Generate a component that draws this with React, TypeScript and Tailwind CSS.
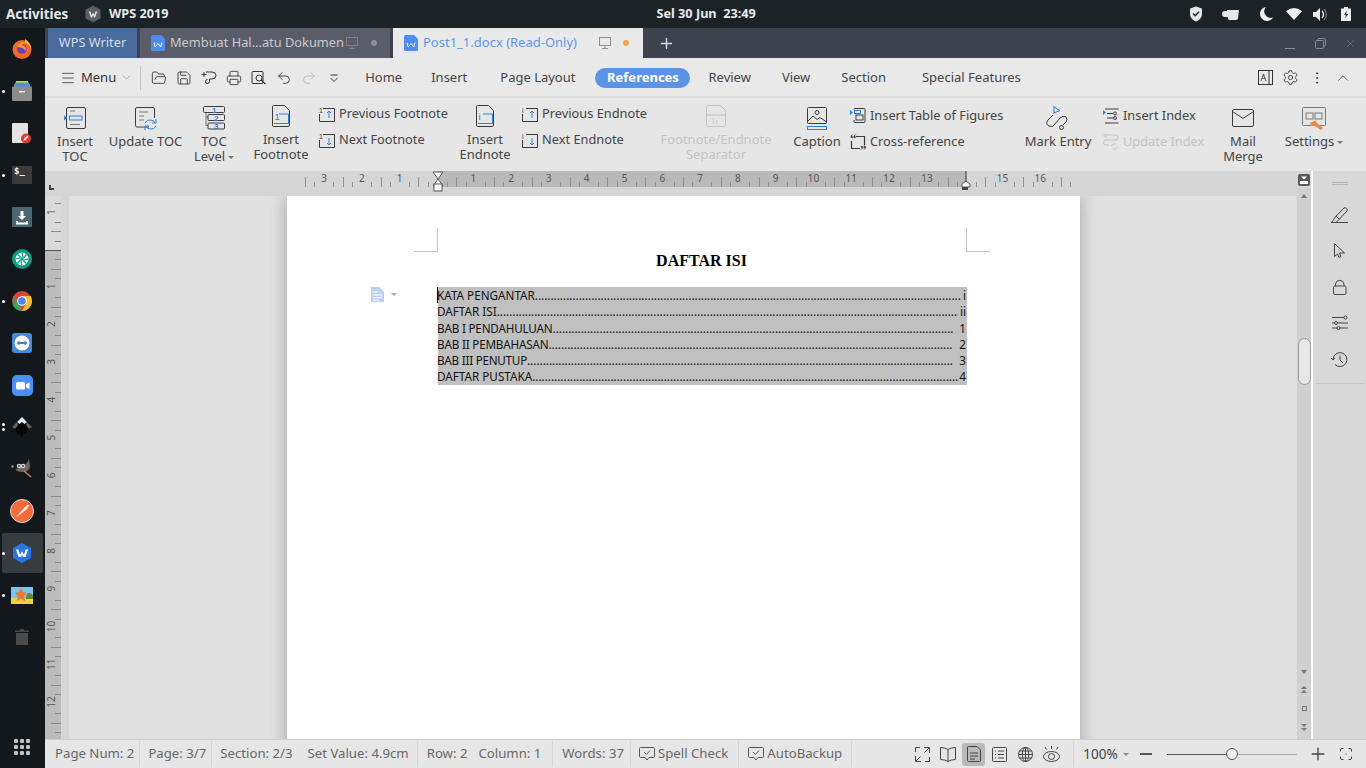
import { ReactNode } from "react";
import { ChevronDown, ChevronUp, FolderOpen, Menu, MoreVertical, Plus, Printer, Redo2, Save, Settings, Undo2, X } from "lucide-react";

const UI = "font-['Noto_Sans',sans-serif]";
const BLUE = "#2f7fe0";
const INK = "#3a3a3a";

function Ico({ s = 24, w, h, vb, children, className }: { s?: number; w?: number; h?: number; vb?: string; children: ReactNode; className?: string }) {
  const width = w ?? s;
  const height = h ?? s;
  return (
    <svg width={width} height={height} viewBox={vb ?? `0 0 ${width} ${height}`} fill="none" stroke={INK} strokeWidth="1" className={`shrink-0 ${className ?? ""}`}>
      {children}
    </svg>
  );
}

/* ---------- top bar ---------- */
function TopBar() {
  return (
    <div className="flex h-[28px] items-center bg-[#1b2327] text-[12.700px] font-bold text-[#e8eaeb]">
      <span className="ml-[6px] w-[79px] text-[13.400px]">Activities</span>
      <svg width="16" height="18" viewBox="0 0 16 18">
        <path d="M8 .5 15.500 4.700v8.600L8 17.500.5 13.300V4.700z" fill="#5c6064" />
        <path d="M3.800 6.500h1.600l1.200 4 1.400-3 1.400 3 1.200-4h1.600l-2.200 6H9L8 10l-1 2.500H6z" fill="#f0f0f0" />
      </svg>
      <span className="ml-[8px]">WPS 2019</span>
      <span className="ml-[488px] whitespace-pre">Sel 30 Jun  23:49</span>
      <div className="ml-auto flex items-center">
        <svg width="14" height="16" viewBox="0 0 14 16" className="mr-[19px]">
          <path d="M7 .5 13 2.500V8c0 3.500-2.500 6-6 7.500C3.500 14 1 11.500 1 8V2.500z" fill="#e6e6e6" />
          <path d="m4 7.500 2.200 2.300L10 5.800" stroke="#1b2327" strokeWidth="1.400" fill="none" />
        </svg>
        <svg width="17" height="11" viewBox="0 0 17 11" className="mr-[21px]">
          <path d="M5 1h12l-1 8.500q-.2 1.500-2 1.500H8q-1.800 0-2-1.500L5.800 8H3Q0 8 0 5t3-3h2z" fill="#e6e6e6" />
        </svg>
        <svg width="13" height="14" viewBox="0 0 13 14" className="mr-[13px]">
          <path d="M6 0a7 7 0 1 0 7 10.500A6.500 6.500 0 0 1 6 0z" fill="#eeeeee" />
        </svg>
        <svg width="16" height="12" viewBox="0 0 16 12" className="mr-[11px]">
          <path d="M0 3.200Q8-3.200 16 3.200L8 12z" fill="#eeeeee" />
        </svg>
        <svg width="15" height="13" viewBox="0 0 15 13" className="mr-[13px]">
          <path d="M0 4h3l4-4v13L3 9H0z" fill="#eeeeee" />
          <path d="M9 3q3 3.500 0 7" stroke="#eeeeee" strokeWidth="1.300" fill="none" />
          <path d="M11 1q5 5.500 0 11" stroke="#777" strokeWidth="1.200" fill="none" />
        </svg>
        <svg width="10" height="14" viewBox="0 0 10 14" className="mr-[15px]">
          <path d="M3 0h4v1.500h3V14H0V1.500h3z" fill="#eeeeee" />
          <path d="M6 3.500 3 8h2l-1 3.500L7.200 7H5.200z" fill="#1b2327" />
        </svg>
      </div>
    </div>
  );
}

/* ---------- dock ---------- */
function DockItem({ dots = 0, active, children }: { dots?: number; active?: boolean; children: ReactNode }) {
  return (
    <div className="relative flex h-[42px] w-full shrink-0 items-center justify-center pr-px">
      {active && <div className="absolute inset-x-[2px] inset-y-px rounded-[2px] bg-[#373c41]" />}
      {dots > 0 && (
        <div className="absolute left-[2px] flex flex-col gap-[2px]">
          {Array.from({ length: dots }).map((_, i) => (
            <div key={i} className="h-[3px] w-[3px] rounded-full bg-white" />
          ))}
        </div>
      )}
      <div className="relative flex">{children}</div>
    </div>
  );
}

function Dock() {
  return (
    <div className="flex w-[45px] shrink-0 flex-col bg-[#13181c]">
      <DockItem>
        <svg width="20" height="21" viewBox="0 0 20 21" className="-translate-y-px">
          <circle cx="10" cy="11.500" r="9.500" fill="#f2682a" />
          <path d="M13 1q6 4 6 10-3-7-6-6z" fill="#ffbd2e" />
          <circle cx="10" cy="11" r="4.800" fill="#6a3fb5" />
          <path d="M5 9q2-5 8-5-3 2-3 3 5 1 4 6-3-4-9-4z" fill="#ff9a2e" />
        </svg>
      </DockItem>
      <DockItem dots={1}>
        <svg width="20" height="20" viewBox="0 0 20 20">
          <rect x="4" y="0" width="12" height="3" fill="#f2c53d" />
          <rect x="3" y="1.500" width="14" height="3" fill="#4caf7a" />
          <rect x="2" y="3" width="16" height="3" fill="#4a8fe0" />
          <rect x="0" y="5.500" width="20" height="14.500" rx="1" fill="#8c8c8c" />
          <rect x="7" y="10" width="6" height="1.500" fill="#eeeeee" />
        </svg>
      </DockItem>
      <DockItem>
        <svg width="21" height="21" viewBox="0 0 21 21">
          <rect x="0" y="0" width="16" height="20" rx="1" fill="#e4e4e4" />
          <circle cx="14" cy="15.500" r="5" fill="#e23a2e" />
          <path d="m11.500 18 1-3 3-2.500 1 1-2.500 3z" fill="#fff" />
        </svg>
      </DockItem>
      <DockItem dots={1}>
        <div className="flex h-[18px] w-[20px] items-start justify-start rounded-[1px] bg-[#3a3a3a] pl-[2px] font-['DejaVu_Sans_Mono',monospace] text-[9px] font-bold leading-[11px] text-white">$_</div>
      </DockItem>
      <DockItem>
        <svg width="20" height="20" viewBox="0 0 20 20">
          <rect width="20" height="20" fill="#4d6772" />
          <path d="M8.500 4h3v5H14l-4 4-4-4h2.500zM4 14h2v1.500h8V14h2v3.500H4z" fill="#fff" />
        </svg>
      </DockItem>
      <DockItem>
        <svg width="20" height="20" viewBox="0 0 20 20">
          <circle cx="10" cy="10" r="10" fill="#0e9a83" />
          <circle cx="10" cy="10" r="6.500" fill="#fff" />
          <path d="M10 3.500 11 8M16.500 10 12 11M10 16.500 9 12M3.500 10 8 9M5.500 5.500l3.500 3M14.500 5.500 11.500 9M14.500 14.500 11 11.500M5.500 14.500 8.500 11" stroke="#0e9a83" strokeWidth="1.200" />
          <circle cx="10" cy="10" r="1.800" fill="#0e9a83" />
        </svg>
      </DockItem>
      <DockItem dots={1}>
        <svg width="20" height="20" viewBox="0 0 20 20">
          <circle cx="10" cy="10" r="10" fill="#d9463d" />
          <path d="M1.340 15 1.340 5 6 12l4 8a10 10 0 0 1-8.660-5z" fill="#3ba55b" />
          <path d="M10 5h8.660A10 10 0 0 1 10 20l4.500-8z" fill="#f5c02e" />
          <circle cx="10" cy="10" r="4.800" fill="#fff" />
          <circle cx="10" cy="10" r="3.800" fill="#4a86e8" />
        </svg>
      </DockItem>
      <DockItem>
        <svg width="20" height="20" viewBox="0 0 20 20">
          <rect width="20" height="20" rx="3" fill="#4a88d8" />
          <circle cx="10" cy="10" r="7.500" fill="#fff" />
          <path d="M4.500 10 7.500 7.500V9h5V7.500l3 2.500-3 2.500V11h-5v1.500z" fill="#3f7fd0" />
        </svg>
      </DockItem>
      <DockItem>
        <svg width="21" height="21" viewBox="0 0 21 21">
          <rect width="21" height="21" rx="5" fill="#4a90f7" />
          <rect x="4" y="7" width="9" height="7.500" rx="1.500" fill="#fff" />
          <path d="m14 9.500 3.500-2.300v7l-3.500-2.300z" fill="#fff" />
        </svg>
      </DockItem>
      <DockItem dots={2}>
        <svg width="20" height="20" viewBox="0 0 20 20">
          <path d="M10 0 20 10l-5 3-1 4-2-1-2 4-2-3-3 1-1-4-4-4z" fill="#050607" />
          <path d="M10 0 15 5 12.500 7l-2.500-2-2.500 2L5 5z" fill="#e8e8e8" />
          <path d="M0 10 5 5l1 3-3 4zM20 10l-5-5-1 3 3 4z" fill="#5f6368" />
        </svg>
      </DockItem>
      <DockItem>
        <svg width="22" height="20" viewBox="0 0 22 20">
          <path d="M18 0 19 8q-1 5-8 5-5 0-7-3 4 0 8-3 4-2 6-7z" fill="#6e6658" />
          <circle cx="8" cy="7" r="2.200" fill="#ddd" />
          <circle cx="12" cy="7" r="2.200" fill="#ddd" />
          <circle cx="8" cy="7" r=".9" fill="#222" />
          <circle cx="12" cy="7" r=".9" fill="#222" />
          <circle cx="1.500" cy="7.500" r="1.200" fill="#999" />
          <path d="m13 12 7 6" stroke="#c98a3a" strokeWidth="1.500" />
        </svg>
      </DockItem>
      <DockItem>
        <svg width="24" height="24" viewBox="0 0 24 24">
          <circle cx="12" cy="12" r="11.500" fill="#f26b3a" stroke="#e9dcd4" />
          <path d="M6 18 14 9l3-3q2-1 2 1l-3 4-8 6z" fill="#fbe6da" />
        </svg>
      </DockItem>
      <DockItem dots={1} active>
        <svg width="18" height="20" viewBox="0 0 18 20">
          <path d="M9 0 18 5v10l-9 5-9-5V5z" fill="#2b74e2" />
          <path d="M3 6.500h2.500L7 12l2-4 2 4 1.500-5.500H15L12.500 14H10L9 11.500 8 14H5.500z" fill="#fff" />
        </svg>
      </DockItem>
      <DockItem dots={1}>
        <svg width="22" height="17" viewBox="0 0 22 17">
          <rect width="22" height="17" fill="#7ec4ea" />
          <rect y="11" width="22" height="6" fill="#f2d13e" />
          <path d="M15 12q0-6 3-6t4 3v3z" fill="#5c8a3a" />
          <path d="M10 1l2 4 4 1-3 3 1 5-4-2-4 2 1-5-3-3 4-1z" fill="#ea7a3a" />
        </svg>
      </DockItem>
      <DockItem>
        <svg width="14" height="16" viewBox="0 0 14 16">
          <path d="M0 1.500h5V0h4v1.500h5V3H0zM1 4h12v12H1z" fill="#4a4a4a" />
        </svg>
      </DockItem>
      <div className="mb-[13px] mr-px mt-auto grid w-[16px] grid-cols-3 gap-[2px] self-center">
        {Array.from({ length: 9 }).map((_, i) => (
          <div key={i} className="h-[4px] w-[4px] rounded-[1px] bg-[#bfc2c4]" />
        ))}
      </div>
    </div>
  );
}

/* ---------- tabs ---------- */
function DocBadge() {
  return (
    <svg width="14" height="16" viewBox="0 0 14 16" className="shrink-0">
      <path d="M1.500 0H10l4 4v10.500q0 1.500-1.500 1.500h-11Q0 16 0 14.500v-13Q0 0 1.500 0z" fill="#4f8cf0" />
      <path d="M3 7.500l1.300 4.500L7 8.500l2.700 3.500L11 7.500" stroke="#fff" fill="none" />
    </svg>
  );
}

function Monitor() {
  return (
    <svg width="12" height="12" viewBox="0 0 12 12" fill="none" stroke="#8d9099" className="shrink-0">
      <rect x=".5" y=".5" width="11" height="8" />
      <path d="M6 8.500v3M3 11.500h6" />
    </svg>
  );
}

function TabBar() {
  return (
    <div className="flex h-[30px] shrink-0 items-stretch bg-[#3e424f] pl-[3px] text-[12.800px]">
      <div className="flex w-[89px] items-center justify-center bg-[#486a9c] text-[#d5dce8]">WPS Writer</div>
      <div className="ml-[3px] flex w-[250px] items-center bg-[#5b5c69] pl-[11px] text-[#c9cad0]">
        <DocBadge />
        <span className="ml-[5px] whitespace-nowrap">Membuat Hal...atu Dokumen</span>
        <div className="ml-[2px] opacity-70"><Monitor /></div>
        <div className="ml-[13px] h-[6px] w-[6px] rounded-full bg-[#8d8f98]" />
      </div>
      <div className="ml-[3px] flex w-[250px] items-center bg-[#e9e9e9] pl-[11px] text-[#5d97ea]">
        <DocBadge />
        <span className="ml-[5px] whitespace-nowrap text-[13px]">Post1_1.docx (Read-Only)</span>
        <div className="ml-[22px]"><Monitor /></div>
        <div className="ml-[12px] h-[6px] w-[6px] rounded-full bg-[#f0a35a]" />
      </div>
      <div className="ml-[15px] flex items-center text-[#d8dadf]">
        <Plus size={17} strokeWidth={2} />
      </div>
      <div className="ml-auto flex items-center pr-[9px] text-[#8a8d97]">
        <div className="mt-[11px] h-px w-[10px] bg-[#8a8d97]" />
        <svg width="11" height="11" viewBox="0 0 11 11" fill="none" stroke="#8a8d97" className="ml-[20px]">
          <rect x=".5" y="2.500" width="8" height="8" rx="1" />
          <path d="M3 2.500V1.500q0-1 1-1h5.500q1 0 1 1V7q0 1-1 1h-1" />
        </svg>
        <X size={13} strokeWidth={1} className="ml-[18px]" />
      </div>
    </div>
  );
}

/* ---------- menu row ---------- */
const menuTabs = [
  { label: "Home", cls: "ml-[23px]" },
  { label: "Insert", cls: "ml-[29px]" },
  { label: "Page Layout", cls: "ml-[33px]" },
];
const menuTabs2 = [
  { label: "Review", cls: "ml-[18px]" },
  { label: "View", cls: "ml-[31px]" },
  { label: "Section", cls: "ml-[31px]" },
  { label: "Special Features", cls: "ml-[36px]" },
];

function MenuRow() {
  return (
    <div className="flex h-[38px] shrink-0 items-center bg-[#e9e9e9] pt-[1px] text-[13px] text-[#444]">
      <Menu size={16} strokeWidth={1.200} className="ml-[15px] text-[#333]" />
      <span className="ml-[5px] text-[#333]">Menu</span>
      <ChevronDown size={13} strokeWidth={1} className="ml-[4px] text-[#777]" />
      <div className="ml-[7px] h-[24px] w-px bg-[#c4c4c4]" />
      <div className="ml-[10px] flex items-center gap-[9px] text-[#333]">
        <FolderOpen size={16} strokeWidth={1.300} />
        <Save size={16} strokeWidth={1.300} />
        <svg width="16" height="16" viewBox="0 0 16 16" fill="none" stroke="currentColor">
          <path d="M5 2h6q4 0 4 3.500T11 9H8.500v2.500a2 2 0 1 1-2-2M.5 4.500h5M3 2v5" />
        </svg>
        <Printer size={16} strokeWidth={1.300} />
        <svg width="16" height="16" viewBox="0 0 16 16" fill="none" stroke="currentColor">
          <rect x="1" y="1.500" width="11" height="12" rx="1" />
          <circle cx="8" cy="8" r="3" />
          <path d="m10 10 4.500 4" strokeWidth="1.400" />
        </svg>
        <Undo2 size={16} strokeWidth={1.300} />
        <Redo2 size={16} strokeWidth={1.300} className="text-[#b5b5b5]" />
        <svg width="16" height="16" viewBox="0 0 16 16" fill="none" stroke="currentColor">
          <path d="M4.500 5h7M4.500 8l3.500 3.500L11.500 8" />
        </svg>
      </div>
      <div className="flex items-center">
        {menuTabs.map((t) => (
          <span key={t.label} className={t.cls}>{t.label}</span>
        ))}
        <span className="ml-[20px] flex h-[20px] w-[95px] items-center justify-center rounded-full bg-[#5b93e6] font-bold text-white">References</span>
        {menuTabs2.map((t) => (
          <span key={t.label} className={t.cls}>{t.label}</span>
        ))}
      </div>
      <div className="ml-auto flex items-center pr-[14px] text-[#333]">
        <svg width="15" height="15" viewBox="0 0 15 15" fill="none" stroke="currentColor">
          <rect x=".5" y=".5" width="14" height="14" />
          <path d="M11 .5v14" />
          <text x="2.500" y="10.500" fontSize="9" fill="currentColor" stroke="none">A</text>
        </svg>
        <Settings size={17} strokeWidth={1.200} className="ml-[9px]" />
        <MoreVertical size={16} strokeWidth={1.300} className="ml-[10px]" />
        <ChevronUp size={18} strokeWidth={1} className="ml-[9px]" />
      </div>
    </div>
  );
}

/* ---------- ribbon ---------- */
function Big({ icon, lines, w, ml, dim, caret, top = "pt-[8px]" }: { icon: ReactNode; lines: string[]; w: string; ml: string; dim?: boolean; caret?: boolean; top?: string }) {
  return (
    <div className={`flex shrink-0 flex-col items-center ${w} ${ml} ${top}`}>
      <div className="flex h-[24px] items-center">{icon}</div>
      <div className={`mt-[3.500px] flex flex-col items-center whitespace-nowrap text-center text-[13px] leading-[15px] ${dim ? "text-[#c4c4c4]" : "text-[#444]"}`}>
        {lines.map((l, i) => (
          <span key={l} className="flex items-center">
            {l}
            {caret && i === lines.length - 1 && <span className="ml-[3px] mt-[2px] h-0 w-0 border-x-[3px] border-t-[3px] border-x-transparent border-t-[#777]" />}
          </span>
        ))}
      </div>
    </div>
  );
}

function Small({ icon, label, dim }: { icon: ReactNode; label: string; dim?: boolean }) {
  return (
    <div className={`flex h-[26px] items-center whitespace-nowrap text-[12.800px] ${dim ? "text-[#c4c4c4]" : "text-[#444]"}`}>
      <span className="flex w-[20px] shrink-0">{icon}</span>
      {label}
    </div>
  );
}

function FootIcon({ up, mark }: { up: boolean; mark: string }) {
  return (
    <Ico w={16} h={16}>
      <path d="M4 2.500h11.500v13H.5V8" />
      <text x="0" y="6.500" fontSize="7" fill={INK} stroke="none" fontFamily="Liberation Sans">{mark}</text>
      {up ? <path d="M10 12V5M8 7l2-2 2 2" stroke={BLUE} /> : <path d="M10 6v7M8 11l2 2 2-2" stroke={BLUE} />}
    </Ico>
  );
}

function NoteIcon({ mark, dim }: { mark: string; dim?: boolean }) {
  const c = dim ? "#c2c2c2" : INK;
  const b = dim ? "#c2c2c2" : BLUE;
  return (
    <Ico w={18} h={22}>
      <path d="M1.500.5h11l5 5v14.500q0 1.500-1.500 1.500H1.500Q.5 21.500.5 20V1.500q0-1 1-1z" stroke={c} />
      <text x="2.500" y="15" fontSize="9.500" fill={b} stroke="none" fontFamily="Liberation Sans">{mark}</text>
      <path d="M7 9h9.500v9.500H2" stroke={b} />
    </Ico>
  );
}

function Ribbon() {
  return (
    <div className="flex h-[75px] shrink-0 items-start border-t-2 border-[#dcdcdc] bg-[#e6e6e6] pl-[7px]">
      <Big
        w="w-[46px]"
        ml=""
        lines={["Insert", "TOC"]}
        icon={
          <Ico w={22} h={22}>
            <rect x="2.500" y=".5" width="19" height="21" rx="1.500" />
            <path d="M6 4h5M6 17.500h10" stroke="#777" />
            <rect x="5.500" y="9" width="12.500" height="4" stroke={BLUE} />
            <path d="M0 8.500v5l3-2.500z" fill={BLUE} stroke="none" />
          </Ico>
        }
      />
      <Big
        w="w-[81px]"
        ml="ml-[7px]"
        lines={["Update TOC"]}
        icon={
          <Ico w={22} h={23}>
            <path d="M14 20H2q-1.500 0-1.500-1.500V2Q.5.5 2 .5h16q1.500 0 1.500 1.500v9" />
            <path d="M4 5h9M4 9h5M4 13h5" stroke="#777" />
            <path d="M10 16q2-4 6-3t4 3M21 19q-2 4-6 3t-4-3" stroke={BLUE} />
            <path d="M21 12v4h-4M10 23v-4h4" stroke={BLUE} />
          </Ico>
        }
      />
      <Big
        w="w-[44px]"
        ml="ml-[6px]"
        caret
        lines={["TOC", "Level"]}
        icon={
          <Ico w={22} h={24}>
            <path d="M3 3.500v16M3 11h3M3 19.500h3" stroke="#777" />
            <rect x=".5" y=".5" width="21" height="6" rx="1" fill="#e6e6e6" />
            <rect x="5" y="8.500" width="16.500" height="6" rx="1" fill="#e6e6e6" />
            <rect x="5" y="17" width="16.500" height="6" rx="1" fill="#e6e6e6" />
            <text x="9" y="6.500" fontSize="8" fontWeight="700" fill={BLUE} stroke="none" fontFamily="Liberation Sans">1</text>
            <text x="11" y="14.500" fontSize="8" fontWeight="700" fill={BLUE} stroke="none" fontFamily="Liberation Sans">2</text>
            <text x="11" y="23" fontSize="8" fontWeight="700" fill={BLUE} stroke="none" fontFamily="Liberation Sans">3</text>
          </Ico>
        }
      />
      <Big w="w-[58px]" ml="ml-[16px]" top="pt-[6px]" lines={["Insert", "Footnote"]} icon={<NoteIcon mark="1" />} />
      <div className="ml-[9px] w-[136px] pt-[3px]">
        <Small label="Previous Footnote" icon={<FootIcon up mark="1" />} />
        <Small label="Next Footnote" icon={<FootIcon up={false} mark="1" />} />
      </div>
      <Big w="w-[54px]" ml="ml-[3px]" top="pt-[6px]" lines={["Insert", "Endnote"]} icon={<NoteIcon mark="i" />} />
      <div className="ml-[10px] w-[133px] pt-[3px]">
        <Small label="Previous Endnote" icon={<FootIcon up mark="i" />} />
        <Small label="Next Endnote" icon={<FootIcon up={false} mark="i" />} />
      </div>
      <Big w="w-[118px]" ml="ml-[2px]" top="pt-[6px]" dim lines={["Footnote/Endnote", "Separator"]} icon={
        <Ico w={20} h={22}>
          <path d="M1.500.5h13l5 5v15q0 1-1 1h-17q-1 0-1-1V1.500q0-1 1-1zM.5 10h19" stroke="#c2c2c2" />
          <text x="5" y="19" fontSize="9" fill="#c2c2c2" stroke="none" fontFamily="Liberation Serif">1i</text>
        </Ico>
      } />
      <Big
        w="w-[50px]"
        ml="ml-[17px]"
        lines={["Caption"]}
        icon={
          <Ico w={20} h={23}>
            <rect x=".5" y=".5" width="19" height="16" rx="1" />
            <circle cx="10" cy="5.500" r="2" />
            <path d="M1 14 6 9l4 3.500 3-2 6 4" />
            <rect x=".5" y="19.500" width="19" height="3" stroke={BLUE} />
          </Ico>
        }
      />
      <div className="ml-[8px] w-[160px] pt-[5px]">
        <Small
          label="Insert Table of Figures"
          icon={
            <Ico w={16} h={16}>
              <path d="M4 1.500q0-1 1-1h9q1 0 1 1v12q0 1-1 1H5q-1 0-1-1V12" />
              <rect x="6" y="7" width="7" height="5" />
              <rect x="4.500" y="2.500" width="6" height="3" stroke={BLUE} />
              <path d="M0 2v5l3-2.500z" fill={BLUE} stroke="none" />
            </Ico>
          }
        />
        <Small
          label="Cross-reference"
          icon={
            <Ico w={16} h={16} className="overflow-visible">
              <path d="M6 2.500h8.500v9M1.500 7v7.500H10" strokeWidth="1.200" />
              <text x="0" y="9" fontSize="13" fontWeight="700" fill={INK} stroke="none" fontFamily="Liberation Serif">“</text>
              <text x="10" y="20" fontSize="13" fontWeight="700" fill={INK} stroke="none" fontFamily="Liberation Serif">”</text>
            </Ico>
          }
        />
      </div>
      <Big
        w="w-[72px]"
        ml="ml-[12px]"
        lines={["Mark Entry"]}
        icon={
          <Ico w={24} h={24}>
            <path d="M8 0v8" stroke={BLUE} />
            <path d="M8 1l6 3.500L8 7" stroke={BLUE} />
            <path d="M7 9 2 14q-3 4 1 6t6-2l5-6q3-3 6-1 2 2 0 5l-3 3" />
            <circle cx="15.500" cy="21.500" r="2" />
          </Ico>
        }
      />
      <div className="ml-[9px] w-[109px] pt-[5px]">
        <Small
          label="Insert Index"
          icon={
            <Ico w={16} h={16}>
              <path d="M2 1h13.500M4 5.500h6M4 10h6M2 15h13.500" />
              <circle cx="12" cy="5.500" r="1.500" />
              <circle cx="12" cy="10" r="1.500" />
              <path d="M0 2v5l3-2.500z" fill={BLUE} stroke="none" />
            </Ico>
          }
        />
        <Small
          dim
          label="Update Index"
          icon={
            <Ico w={16} h={16}>
              <path d="M2.500 1H12q3 0 3 2.500T12 6H3q-2.500 0-2.500 2.500T3 11h3" stroke="#c2c2c2" />
              <circle cx="2.500" cy="1.500" r="1.500" stroke="#c2c2c2" />
              <path d="M8 12q2-3 5-2M15 13q-2 3-5 2" stroke="#c2c2c2" />
            </Ico>
          }
        />
      </div>
      <Big
        w="w-[42px]"
        ml="ml-[10px]"
        lines={["Mail", "Merge"]}
        icon={
          <Ico w={22} h={18}>
            <rect x=".5" y=".5" width="21" height="17" rx="1.500" />
            <path d="m.5 2.500 10.500 7 10.500-7" />
          </Ico>
        }
      />
      <Big
        w="w-[64px]"
        ml="ml-[18px]"
        caret
        lines={["Settings"]}
        icon={
          <Ico w={24} h={23} className="overflow-visible">
            <rect x=".5" y=".5" width="23" height="18" rx="1" stroke="#777" />
            <rect x="4" y="6" width="7" height="6" stroke="#777" />
            <rect x="13" y="6" width="7" height="6" stroke="#777" />
            <path d="M8 15q3 1 5-2l2 3 6 5-2 2-6-4-4 0z" fill="#ee8a45" stroke="none" />
          </Ico>
        }
      />
    </div>
  );
}

/* ---------- rulers ---------- */
const hNums = [-3, -2, -1, 1, 2, 3, 4, 5, 6, 7, 8, 9, 10, 11, 12, 13, 15, 16];

function HRuler() {
  const ticks = Array.from({ length: 82 }, (_, i) => i);
  return (
    <div className="flex h-[25px] shrink-0 bg-[#d5d5d5]">
      <div className="relative h-full w-[24px] shrink-0">
        <div className="absolute left-[4px] top-[14px] h-[5px] w-[5px] border-b-2 border-l-2 border-[#444]" />
      </div>
      <svg width="1228" height="25" viewBox="69 0 1228 25" className="shrink-0">
        <rect x="438" y="0" width="528" height="16" fill="#b9b9b9" />
        {ticks.map((i) => {
          const x = Math.round(305 + i * 9.45) + 0.5;
          if (i % 4 === 2) return null;
          return <line key={i} x1={x} x2={x} y1={i % 4 === 0 ? 6 : 11} y2={16} stroke="#8f8f8f" strokeWidth="1" />;
        })}
        {hNums.map((n) => (
          <text key={n} x={n < 0 ? 437.5 + n * 37.8 : 435.5 + n * 37.8} y="11" textAnchor="middle" fontSize="10" fill="#555" fontFamily="Noto Sans">
            {Math.abs(n)}
          </text>
        ))}
        <line x1="966" x2="966" y1="0" y2="11" stroke="#333" />
        <path d="M433 1h10l-5 7 5 7h-10l5-7z" fill="#fff" stroke="#555" />
        <rect x="434" y="13" width="8" height="7" fill="#fff" stroke="#555" />
        <path d="M962 16v-3l4-3 4 3v3z" fill="#fff" stroke="#555" />
        <rect x="962" y="16" width="6" height="3" fill="#444" />
      </svg>
    </div>
  );
}

function VRuler() {
  const ticks = Array.from({ length: 58 }, (_, i) => i - 5);
  const nums = [-1, 1, 2, 3, 4, 5, 6, 7, 8, 9, 10, 11, 12];
  return (
    <div className="w-[24px] shrink-0 bg-[#d6d6d6]">
      <svg width="24" height="543" viewBox="45 196 24 543" className="block">
        <rect x="45" y="196" width="16" height="55" fill="#dadada" />
        <rect x="45" y="250" width="16" height="489" fill="#bcbcbc" />
        <line x1="45" x2="61" y1="250.500" y2="250.500" stroke="#555" />
        {ticks.map((k) => {
          const y = Math.round(250 + k * 9.45) + 0.5;
          if (k % 4 === 0) return null;
          return <line key={k} x1={Math.abs(k % 4) === 2 ? 51 : 55} x2="61" y1={y} y2={y} stroke="#8a8a8a" />;
        })}
        {nums.map((n) => {
          const y = n < 0 ? 212 : 248.500 + n * 37.800;
          return (
            <text key={n} x="52" y={y} textAnchor="middle" fontSize="10" fill="#555" fontFamily="Noto Sans" transform={`rotate(-90 52 ${y}) translate(0 3)`}>
              {Math.abs(n)}
            </text>
          );
        })}
      </svg>
    </div>
  );
}

/* ---------- page ---------- */
const toc = [
  { label: "KATA PENGANTAR", page: "i", dots: 136, cls: "" },
  { label: "DAFTAR ISI", page: "ii", dots: 147, cls: "" },
  { label: "BAB I PENDAHULUAN", page: "1", dots: 128, cls: "tracking-[-0.2px]" },
  { label: "BAB II PEMBAHASAN", page: "2", dots: 129, cls: "tracking-[-0.2px]" },
  { label: "BAB III PENUTUP", page: "3", dots: 136, cls: "tracking-[-0.25px]" },
  { label: "DAFTAR PUSTAKA", page: "4", dots: 136, cls: "" },
];

function Page() {
  return (
    <div className="relative ml-[218px] h-[700px] w-[793px] shrink-0 bg-white shadow-[0_0_16px_rgba(0,0,0,0.28)]">
      <div className="flex justify-between pl-[127px] pr-[90px] pt-[32px]">
        <div className="h-[24px] w-[24px] border-b border-r border-[#c4c4c4]" />
        <div className="h-[24px] w-[24px] border-b border-l border-[#c4c4c4]" />
      </div>
      <div className="ml-[151px] w-[529px]">
        <div className="mt-[-1px] pr-[2px] text-center font-['Liberation_Serif',serif] text-[16px] font-bold leading-[20px] text-black">DAFTAR ISI</div>
        <div className="relative mt-[16px] h-[98px] bg-[#c0c0c0] font-['Noto_Sans',sans-serif] text-[11.700px] leading-[16.300px] text-[#111]">
          {toc.map((r) => (
            <div key={r.label} className="flex h-[16.300px] whitespace-nowrap">
              <span className={`ml-[-1px] ${r.cls}`}>{r.label}</span>
              <span>{".".repeat(r.dots)}</span>
              <span className="ml-auto mr-px">{r.page}</span>
            </div>
          ))}
          <div className="absolute left-[-1px] top-0 h-[16px] w-px bg-black" />
        </div>
      </div>
      <div className="absolute left-[84px] top-[91px] flex items-center">
        <svg width="14" height="15" viewBox="0 0 14 15">
          <path d="M0 0h8l5 5v10H0z" fill="#bcd0ee" />
          <path d="M2 5h5M2 8h9M2 10.500h9M2 13h6" stroke="#fff" />
        </svg>
        <span className="ml-[6px] h-0 w-0 border-x-[3px] border-t-[3px] border-x-transparent border-t-[#aaa]" />
      </div>
    </div>
  );
}

/* ---------- scrollbar + side panel ---------- */
function ScrollColumn() {
  return (
    <div className="flex w-[14px] shrink-0 flex-col bg-[#d0d0d0]">
      <div className="flex h-[17px] shrink-0 items-center justify-center bg-[#d5d5d5]">
        <svg width="12" height="12" viewBox="0 0 12 12">
          <rect width="12" height="12" rx="2" fill="#5a5a5a" />
          <path d="M3 2.500h6L6 5.500z" fill="#fff" />
          <rect x="2" y="7" width="8" height="3" fill="#fff" />
        </svg>
      </div>
      <div className="mt-[6px] flex justify-center"><span className="h-0 w-0 border-x-[3.500px] border-b-[4px] border-x-transparent border-b-[#777]" /></div>
      <div className="ml-px mt-[140px] h-[47px] w-[13px] rounded-[7px] border border-[#9a9a9a] bg-[#e8e8e8]" />
      <div className="mt-auto flex flex-col items-center pb-[8px]">
        <span className="h-0 w-0 border-x-[3.500px] border-t-[4px] border-x-transparent border-t-[#777]" />
        <div className="mt-[12px] flex flex-col items-center gap-px">
          <span className="h-0 w-0 border-x-[3px] border-b-[3px] border-x-transparent border-b-[#777]" />
          <span className="h-0 w-0 border-x-[3px] border-b-[3px] border-x-transparent border-b-[#777]" />
        </div>
        <div className="mt-[13px] h-[5px] w-[5px] border border-[#777]" />
        <div className="mt-[13px] flex flex-col items-center gap-px">
          <span className="h-0 w-0 border-x-[3px] border-t-[3px] border-x-transparent border-t-[#777]" />
          <span className="h-0 w-0 border-x-[3px] border-t-[3px] border-x-transparent border-t-[#777]" />
        </div>
      </div>
    </div>
  );
}

function SidePanel() {
  return (
    <div className="ml-[2px] flex w-[53px] shrink-0 flex-col items-center bg-[#d8d8d8] pt-[11px] text-[#444]">
      <div className="h-[3px] w-[16px] border-y border-[#b4b4b4]" />
      <svg width="18" height="16" viewBox="0 0 18 16" fill="none" stroke="currentColor" className="mt-[22px]">
        <path d="M0 15.500h17M1 15 5 9l8-8q1-1 2.500.5t.5 2.500l-7.500 8-3 3M5 9l3.500 3.500" />
      </svg>
      <svg width="12" height="16" viewBox="0 0 12 16" fill="none" stroke="currentColor" className="mt-[20px]">
        <path d="M.5.500v13l3-2.500 1.500 3.500 2-1-1.500-3.500h5z" />
      </svg>
      <svg width="14" height="16" viewBox="0 0 14 16" fill="none" stroke="currentColor" className="mt-[20px]">
        <rect x=".5" y="7" width="12.500" height="8.500" rx="1.500" />
        <path d="M2.500 7V5a4.300 4.300 0 0 1 8.500 0v2" />
      </svg>
      <svg width="16" height="15" viewBox="0 0 16 15" fill="none" stroke="currentColor" className="mt-[20px]">
        <path d="M0 2.500h12M0 8h2.500M5.500 8H16M0 13h5M8 13h8" />
        <circle cx="13.500" cy="2.500" r="1.500" />
        <circle cx="4" cy="8" r="1.500" />
        <circle cx="6.500" cy="13" r="1.500" />
      </svg>
      <svg width="17" height="15" viewBox="0 0 17 15" fill="none" stroke="currentColor" className="mt-[22px]">
        <path d="M2 7.500a7 7 0 1 1 2 5M0 6l2 2 2-2M9 3.500V8l3 3" />
      </svg>
      <div className="mt-[16px] h-px w-[48px] bg-[#c6c6c6]" />
    </div>
  );
}

/* ---------- status bar ---------- */
function Div({ cls }: { cls: string }) {
  return <div className={`h-[26px] w-px bg-[#d6d6d6] ${cls}`} />;
}

function CheckBubble() {
  return (
    <svg width="16" height="14" viewBox="0 0 16 14" fill="none" stroke="#555" className="shrink-0">
      <path d="M1.500.5h13q1 0 1 1v8q0 1-1 1H10l-2 2.500L6 10.500H1.500q-1 0-1-1v-8q0-1 1-1z" />
      <path d="m5 5 2.500 2.500L11 3.500" />
    </svg>
  );
}

function StatusBar() {
  return (
    <div className="flex h-[29px] shrink-0 items-center border-t border-[#cfcfcf] bg-[#e6e6e6] pl-[10px] text-[13.200px] text-[#666]">
      <span>Page Num: 2</span>
      <Div cls="ml-[5px]" />
      <span className="ml-[8px]">Page: 3/7</span>
      <Div cls="ml-[5px]" />
      <span className="ml-[8px]">Section: 2/3</span>
      <span className="ml-[15px]">Set Value: 4.9cm</span>
      <Div cls="ml-[8px]" />
      <span className="ml-[9px]">Row: 2</span>
      <span className="ml-[11px]">Column: 1</span>
      <Div cls="ml-[11px]" />
      <span className="ml-[9px]">Words: 37</span>
      <Div cls="ml-[6px]" />
      <div className="ml-[8px]"><CheckBubble /></div>
      <span className="ml-[3px]">Spell Check</span>
      <Div cls="ml-[10px]" />
      <div className="ml-[9px]"><CheckBubble /></div>
      <span className="ml-[3px]">AutoBackup</span>
      <Div cls="ml-[9px]" />

      <div className="ml-[63px] flex items-center text-[#444]">
        <svg width="15" height="15" viewBox="0 0 15 15" fill="none" stroke="currentColor">
          <path d="M9 .5h5.500V6M6 14.500H.5V9M14 1 9.500 5.500M1 14l4.500-4.500M.5 5V.5H5M10 14.500h4.500V10" />
        </svg>
        <svg width="16" height="15" viewBox="0 0 16 15" fill="none" stroke="currentColor" className="ml-[10px]">
          <path d="M8 2.500Q5 .5.500.5v12q4.500 0 7.500 2 3-2 7.500-2V.5Q11 .5 8 2.500zM8 2.500v12" />
        </svg>
        <div className="ml-[6px] flex h-[23px] w-[23px] items-center justify-center rounded-[3px] bg-[#b9b9b9]">
          <svg width="14" height="16" viewBox="0 0 14 16" fill="none" stroke="currentColor">
            <path d="M1.500.5H10l3.500 3.500v10.500q0 1-1 1h-11q-1 0-1-1v-13q0-1 1-1zM3 7h8M3 10h8M3 13h5" />
          </svg>
        </div>
        <svg width="15" height="15" viewBox="0 0 15 15" fill="none" stroke="currentColor" className="ml-[7px]">
          <rect x=".5" y=".5" width="14" height="14" rx="1" />
          <path d="M3 4h1M6 4h6M3 7.500h1M6 7.500h6M3 11h1M6 11h6" />
        </svg>
        <svg width="15" height="15" viewBox="0 0 15 15" fill="none" stroke="currentColor" className="ml-[11px]">
          <circle cx="7.500" cy="7.500" r="7" />
          <ellipse cx="7.500" cy="7.500" rx="3.200" ry="7" />
          <path d="M.5 7.500h14M1.500 4h12M1.500 11h12M7.500 .5v14" />
        </svg>
        <svg width="17" height="16" viewBox="0 0 17 16" fill="none" stroke="currentColor" className="ml-[10px]">
          <ellipse cx="8.500" cy="10.500" rx="8" ry="5" />
          <circle cx="8.500" cy="10.500" r="3" />
          <path d="M8.500 0v3M2 1l1.500 2.500M15 1l-1.500 2.500" />
        </svg>
      </div>
      <Div cls="ml-[13px]" />
      <span className="ml-[9px] text-[13.500px] text-[#444]">100%</span>
      <span className="ml-[5px] h-0 w-0 border-x-[3px] border-t-[3px] border-x-transparent border-t-[#888]" />
      <div className="ml-[11px] h-[2px] w-[12px] bg-[#555]" />
      <div className="ml-[15px] flex w-[130px] items-center">
        <div className="h-px w-[59px] bg-[#555]" />
        <div className="h-[12px] w-[12px] shrink-0 rounded-full border border-[#555] bg-[#f0f0f0]" />
        <div className="h-px flex-1 bg-[#aaa]" />
      </div>
      <Plus size={20} strokeWidth={1.600} className="ml-[11px] text-[#444]" />
      <svg width="12" height="12" viewBox="0 0 12 12" fill="none" stroke="#444" className="ml-[12px]">
        <path d="M.5 3.500V2q0-1.500 1.500-1.500h1.500M8.500 .5H10q1.500 0 1.500 1.500v1.500M11.500 8.500V10q0 1.500-1.500 1.500H8.500M3.500 11.500H2Q.5 11.500.5 10V8.500M5.500 6h1" />
      </svg>
    </div>
  );
}

export default function App() {
  return (
    <div className={`flex h-[768px] w-[1366px] flex-col overflow-hidden ${UI}`}>
      <TopBar />
      <div className="flex min-h-0 flex-1">
        <Dock />
        <div className="flex min-w-0 flex-1 flex-col">
          <TabBar />
          <MenuRow />
          <Ribbon />
          <div className="flex min-h-0 flex-1">
            <div className="flex w-[1252px] shrink-0 flex-col">
              <HRuler />
              <div className="flex min-h-0 flex-1">
                <VRuler />
                <div className="flex min-w-0 flex-1 overflow-hidden bg-[#e0e0e0]">
                  <Page />
                </div>
              </div>
            </div>
            <ScrollColumn />
            <SidePanel />
          </div>
          <StatusBar />
        </div>
      </div>
    </div>
  );
}
